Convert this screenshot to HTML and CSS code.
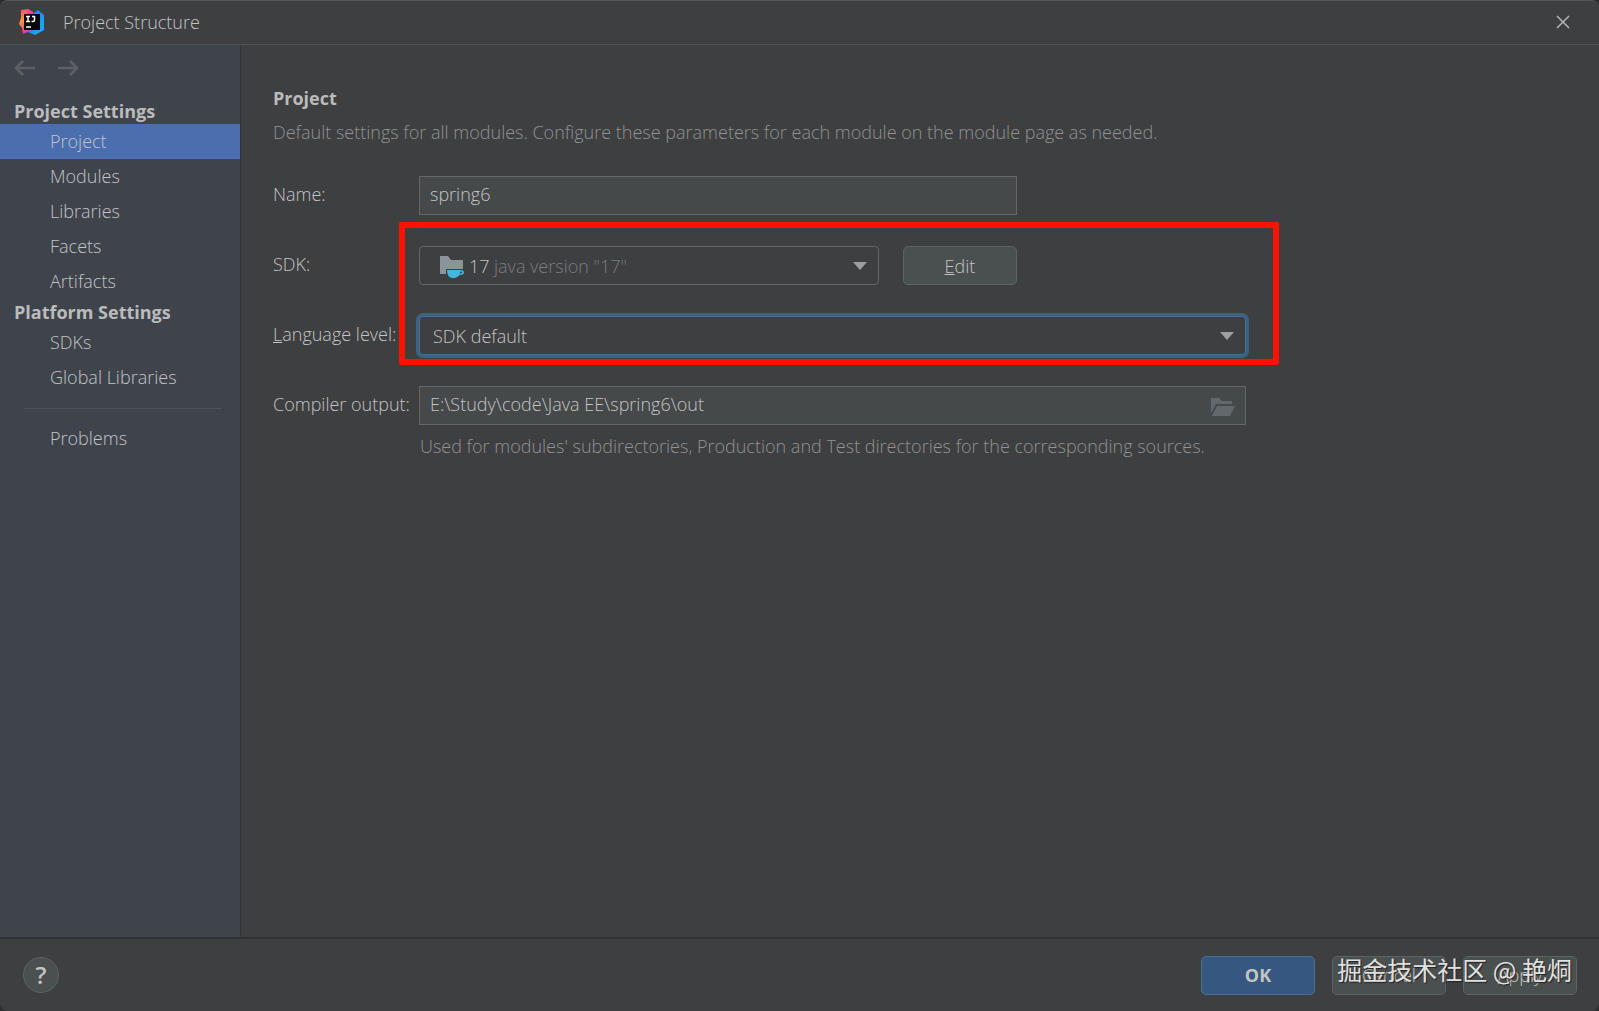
FILE: index.html
```html
<!DOCTYPE html>
<html lang="en">
  <head>
    <meta charset="UTF-8" />
    <meta name="viewport" content="width=device-width, initial-scale=1.0" />
    <title>Project Structure</title>
    <link rel="stylesheet" href="styles.css">
  </head>
  <body>
    <div class="window">
      <header class="title-bar">
        <svg class="logo" viewBox="0 0 26 26" width="26" height="26">
          <defs>
            <linearGradient id="warm" x1="0" y1="0" x2="0" y2="1">
              <stop offset="0" stop-color="#ff4f6d" />
              <stop offset="0.45" stop-color="#fb9a3c" />
              <stop offset="1" stop-color="#f0308c" />
            </linearGradient>
            <linearGradient id="cool" x1="0" y1="0" x2="1" y2="1">
              <stop offset="0" stop-color="#2f6bea" />
              <stop offset="1" stop-color="#12b8f4" />
            </linearGradient>
          </defs>
          <path d="M2 1 L9 0 L14 3 L13 20 L4 25 L3 19 L0 15 L2 9 Z" fill="url(#warm)" />
          <path d="M13 5 L19 1 L25 6 L25 21 L16 26 L9 23 L13 16 Z" fill="url(#cool)" />
          <path d="M9 0 L14 3 L14 8 L8 6 Z" fill="#f43f9b" />
          <path d="M4 25 L9 20 L14 21 L9 23 Z" fill="#b146d8" />
          <rect x="5" y="5" width="16" height="16" fill="#090608" />
          <path d="M7 7.500h4M7 12.500h4M9 7.500v5M13 7.500h3M15.500 7v4q0 1.500-1.500 1.500H12.500M7 18h5" fill="none" stroke="#fff" stroke-width="1.500" />
        </svg>
        <h1 class="window-title">Project Structure</h1>
        <button class="close" type="button" aria-label="Close">
          <svg viewBox="0 0 14 14" width="14" height="14">
            <path d="M1 1l12 12M13 1L1 13" />
          </svg>
        </button>
      </header>

      <div class="content">
        <nav class="sidebar">
          <div class="history">
            <button type="button" aria-label="Back">
              <svg viewBox="0 0 22 16" width="22" height="16"><path d="M21 8H2M9 1L2 8l7 7" /></svg>
            </button>
            <button type="button" aria-label="Forward">
              <svg viewBox="0 0 22 16" width="22" height="16"><path d="M1 8h19M13 1l7 7-7 7" /></svg>
            </button>
          </div>
          <h2 class="group">Project Settings</h2>
          <a class="item selected" href="#project">Project</a>
          <a class="item" href="#modules">Modules</a>
          <a class="item" href="#libraries">Libraries</a>
          <a class="item" href="#facets">Facets</a>
          <a class="item" href="#artifacts">Artifacts</a>
          <h2 class="group">Platform Settings</h2>
          <a class="item" href="#sdks">SDKs</a>
          <a class="item" href="#global">Global Libraries</a>
          <hr class="separator" />
          <a class="item" href="#problems">Problems</a>
        </nav>

        <main class="main" id="project">
          <h2 class="main-title">Project</h2>
          <p class="description">Default settings for all modules. Configure these parameters for each module on the module page as needed.</p>
          <form class="settings" id="settings">
            <div class="row">
              <label for="name">Name:</label>
              <input class="field name" id="name" type="text" value="spring6" />
            </div>
            <div class="marked">
              <div class="row">
                <label for="sdk">SDK:</label>
                <div class="select-box sdk">
                  <select id="sdk">
                    <option>17</option>
                  </select>
                  <svg class="sdk-icon" viewBox="0 0 24 22" width="24" height="22">
                    <path d="M0 0h8l3 4h12v14H0z" fill="#8b9499" />
                    <path d="M6 13h19v6H19l-3 3H9L6 19z" fill="#3d3f41" />
                    <path d="M7 14h13.500q3.500 0 3.500 2.500T19.500 19q-2 3-5 3H12q-5-1-5-8zM20 15.500v2q2 0 2-1t-2-1z" fill="#40b6e0" fill-rule="evenodd" />
                  </svg>
                  <span class="sdk-version">java version "17"</span>
                  <svg class="arrow" viewBox="0 0 14 8" width="14" height="8"><path d="M0 0h14L7 8z" /></svg>
                </div>
                <button class="button edit" type="button"><u>E</u>dit</button>
              </div>
              <div class="row">
                <label for="level"><u>L</u>anguage level:</label>
                <div class="select-box level">
                  <select id="level">
                    <option>SDK default</option>
                  </select>
                  <svg class="arrow" viewBox="0 0 14 8" width="14" height="8"><path d="M0 0h14L7 8z" /></svg>
                </div>
              </div>
            </div>
            <div class="row">
              <label for="output">Compiler output:</label>
              <div class="output-box">
                <input class="field" id="output" type="text" value="E:\Study\code\Java EE\spring6\out" />
                <button class="browse" type="button" aria-label="Browse">
                  <svg viewBox="0 0 24 18" width="24" height="18">
                    <path d="M0 0h8l3 3h10v3H5L0 15z" />
                    <path d="M6 8h18l-5 10H1z" />
                  </svg>
                </button>
              </div>
            </div>
            <p class="hint">Used for modules' subdirectories, Production and Test directories for the corresponding sources.</p>
          </form>
        </main>
      </div>

      <footer class="footer">
        <button class="help" type="button" aria-label="Help">?</button>
        <div class="actions">
          <button class="button ok" type="submit" form="settings">OK</button>
          <button class="button" type="button">Cancel</button>
          <button class="button" type="button"><u>A</u>pply</button>
          <span class="watermark">掘金技术社区 @ 艳烔</span>
        </div>
      </footer>
    </div>
  </body>
</html>
```

FILE: styles.css
```css
* {
  box-sizing: border-box;
}
body {
  margin: 0;
  background-color: #2b2d2e;
  color: #c4c4c4;
  font-family: "Open Sans", "Noto Sans CJK SC", sans-serif;
  font-size: 18px;
  font-weight: 330;
  line-height: 26px;
}
h1,
h2,
p {
  margin: 0;
  font-size: 18px;
}
button,
input,
select {
  font: inherit;
  color: inherit;
}
button {
  padding: 0;
  border: none;
  background: none;
}
.window {
  display: flex;
  flex-direction: column;
  min-height: 100vh;
  background-color: #3d3f41;
  border-top: 1px solid #555758;
  border-radius: 8px;
  overflow: hidden;
}

/* title bar */
.title-bar {
  display: flex;
  align-items: center;
  height: 44px;
  padding: 0 29px 2px 19px;
  border-bottom: 1px solid #515354;
}
.window-title {
  flex: 1;
  margin-left: 18px;
  font-weight: inherit;
}
.close {
  display: flex;
}
.close path {
  stroke: #b4b4b4;
  stroke-width: 1.5;
}

/* sidebar */
.content {
  display: flex;
  flex: 1;
}
.sidebar {
  width: 241px;
  background-color: #3e434c;
  border-right: 1px solid #313335;
}
.history {
  display: flex;
  gap: 21px;
  padding: 15px 14px 22px;
}
.history button {
  display: flex;
}
.history path {
  fill: none;
  stroke: #5c6065;
  stroke-width: 2.5;
}
.group {
  padding-left: 14px;
  color: #bbbbbb;
  font-weight: 700;
}
.item {
  display: block;
  padding-left: 50px;
  line-height: 35px;
  color: inherit;
  text-decoration: none;
}
.item.selected {
  background-color: #4b6eaf;
}
.separator {
  height: 1px;
  margin: 13px 18px 12px 24px;
  border: none;
  background-color: #4d5157;
}

/* project page */
.main {
  flex: 1;
  padding: 40px 32px;
}
.main-title {
  color: #bbbbbb;
  font-weight: 700;
}
.description {
  margin-top: 8px;
  color: #929292;
}
.settings {
  display: flex;
  flex-direction: column;
  gap: 31px;
  max-width: 973px;
  margin-top: 31px;
}
.row {
  display: flex;
  align-items: center;
  height: 39px;
}
.row label {
  flex: none;
  width: 146px;
  padding-bottom: 3px;
  white-space: nowrap;
}
.field {
  width: 100%;
  height: 39px;
  padding: 0 10px 3px;
  background-color: #45494a;
  border: 1px solid #646768;
  outline: none;
}
.name {
  width: 598px;
}
.marked {
  position: relative;
  display: flex;
  flex-direction: column;
  gap: 31px;
}
.marked::after {
  content: "";
  position: absolute;
  top: -24px;
  right: -33px;
  bottom: -10px;
  left: 126px;
  border: 6px solid #ff1100;
  border-radius: 2px;
  pointer-events: none;
}
.select-box {
  position: relative;
  height: 39px;
}
.select-box select {
  width: 100%;
  height: 100%;
  padding: 0 13px;
  appearance: none;
  background-color: #3d3f41;
  border: 1px solid #646768;
  border-radius: 4px;
  outline: none;
}
.sdk {
  width: 460px;
}
.sdk select {
  padding-left: 49px;
}
.level {
  flex: 1;
}
.level select {
  border-color: #466d94;
  box-shadow: 0 0 0 3px #3d6185;
}
.arrow {
  position: absolute;
  top: 16px;
  right: 12px;
  fill: #9d9fa0;
  pointer-events: none;
}
.sdk-icon {
  position: absolute;
  top: 10px;
  left: 21px;
  pointer-events: none;
}
.sdk-version {
  position: absolute;
  top: 7px;
  left: 75px;
  color: #7c7c7c;
  pointer-events: none;
}
.button {
  width: 114px;
  height: 39px;
  background-color: #4a4f50;
  border: 1px solid #5e6263;
  border-radius: 5px;
}
.edit {
  margin-left: 24px;
}
.output-box {
  position: relative;
  flex: 1;
}
.output-box .field {
  display: block;
  padding-right: 44px;
}
.browse {
  position: absolute;
  top: 12px;
  right: 11px;
  display: flex;
}
.browse path {
  fill: #62696c;
}
.hint {
  margin: -23px 0 0 147px;
  color: #929292;
  white-space: nowrap;
}

/* bottom bar */
.footer {
  display: flex;
  align-items: center;
  justify-content: space-between;
  height: 74px;
  padding: 0 22px 0 23px;
  border-top: 2px solid #303234;
}
.help {
  width: 36px;
  height: 36px;
  background-color: #4a4f50;
  border: 1px solid #5e6263;
  border-radius: 50%;
  font-size: 24px;
  font-weight: 600;
}
.actions {
  position: relative;
  display: flex;
  gap: 17px;
}
.ok {
  background-color: #365880;
  border-color: #4c708c;
  font-weight: 700;
}
.watermark {
  position: absolute;
  top: 0;
  right: 5px;
  color: #e0e0e0;
  font-family: "Noto Sans CJK SC", sans-serif;
  font-size: 25px;
  font-weight: 400;
  white-space: nowrap;
  text-shadow: 1px 1px 1px #222222;
  pointer-events: none;
}
```
